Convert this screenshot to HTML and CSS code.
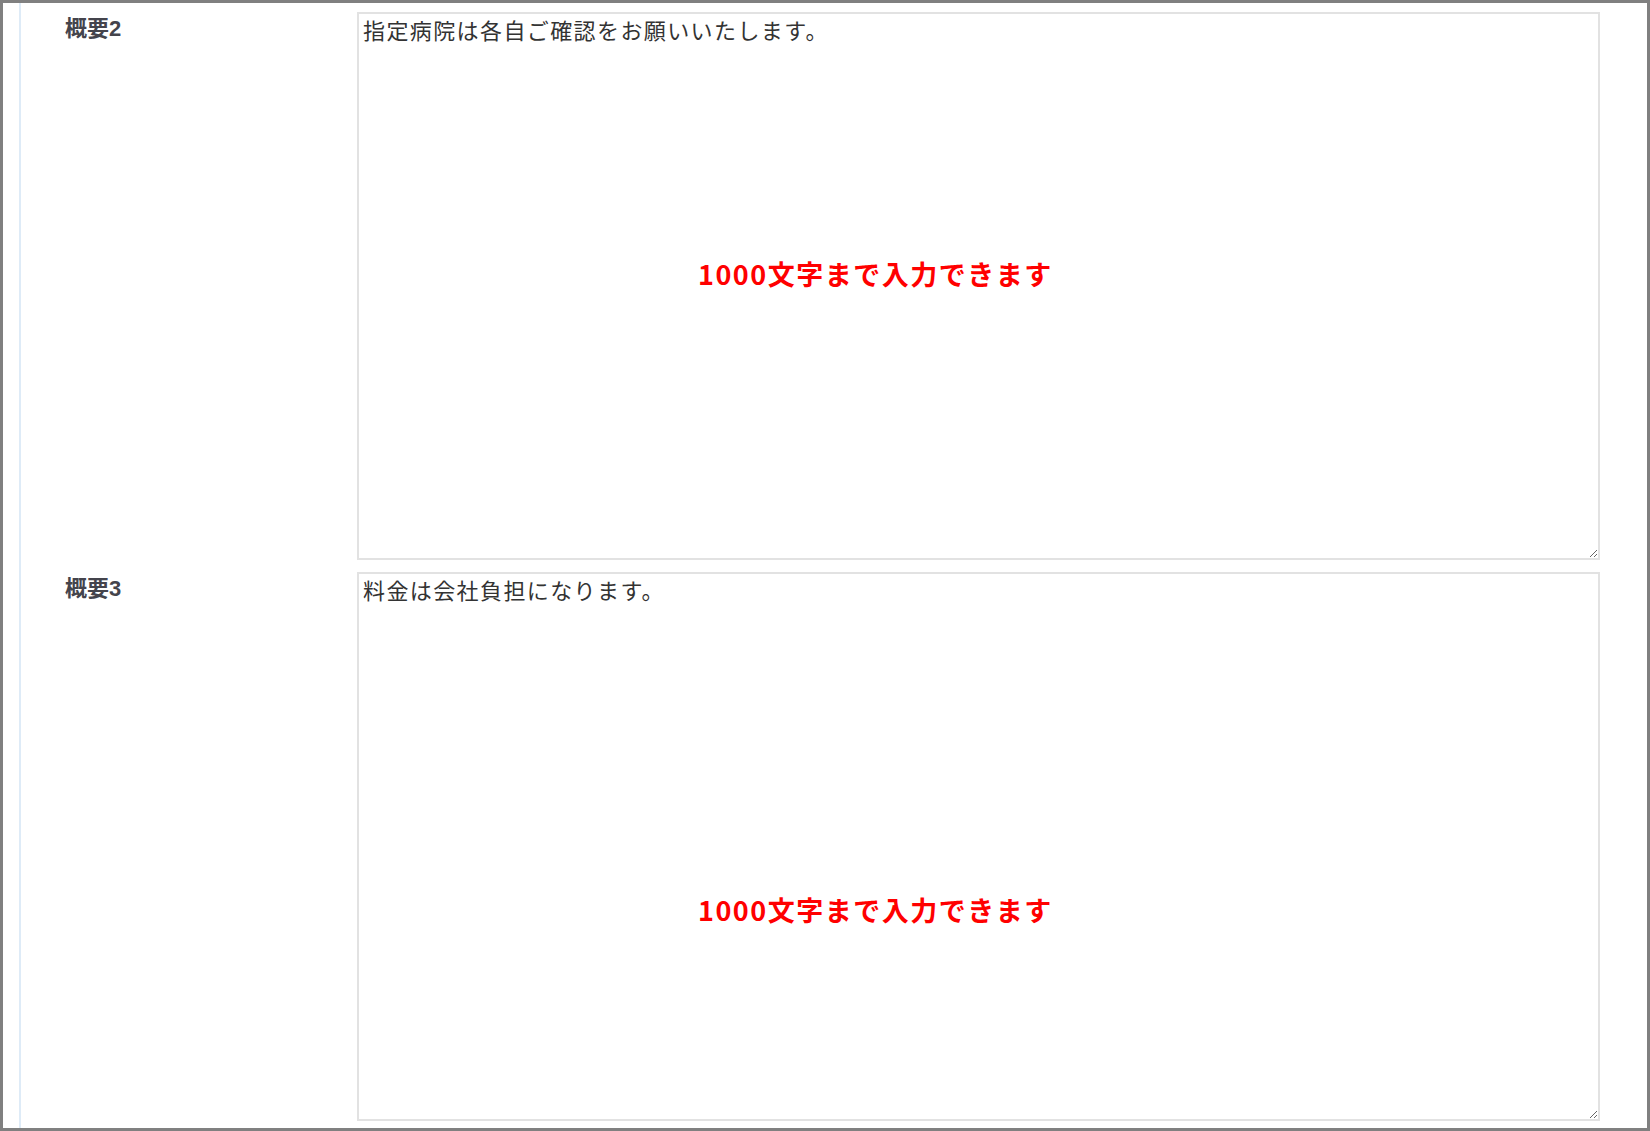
FILE: index.html
```html
<!DOCTYPE html>
<html lang="ja">
  <head>
    <meta charset="UTF-8" />
    <meta name="viewport" content="width=device-width, initial-scale=1.0" />
    <title>概要</title>
    <link rel="stylesheet" href="styles.css">
  </head>
  <body>
    <main class="frame">
      <section class="form">
        <div class="row">
          <label class="row-label" for="summary2">概要2</label>
          <div class="field">
            <textarea id="summary2">指定病院は各自ご確認をお願いいたします。</textarea>
            <span class="note note-first">1000文字まで入力できます</span>
          </div>
        </div>

        <div class="row">
          <label class="row-label" for="summary3">概要3</label>
          <div class="field">
            <textarea id="summary3">料金は会社負担になります。</textarea>
            <span class="note note-second">1000文字まで入力できます</span>
          </div>
        </div>
      </section>
    </main>
  </body>
</html>
```

FILE: styles.css
```css
html,
body {
  margin: 0;
  height: 100%;
}

body {
  font-family: "Liberation Sans", "Noto Sans CJK JP", sans-serif;
  background: #fff;
}

.frame {
  box-sizing: border-box;
  height: 100vh;
  border: 3px solid #808080;
  overflow: hidden;
  padding-left: 16px;
}

.form {
  height: 100%;
  border-left: 2px solid #deebf7;
  padding-top: 9px;
  display: flex;
  flex-direction: column;
  gap: 12px;
}

.row {
  display: grid;
  grid-template-columns: 336px 1243px;
}

.row-label {
  padding: 2px 0 0 44px;
  font-size: 22px;
  line-height: 1.4;
  font-weight: 700;
  color: #44444c;
}

.field {
  position: relative;

  textarea {
    display: block;
    box-sizing: border-box;
    width: 100%;
    height: 548px;
    margin: 0;
    padding: 0 4px;
    border: 2px solid #e2e2e2;
    font-family: "Noto Sans CJK JP", sans-serif;
    font-size: 22px;
    line-height: 1.4;
    letter-spacing: 1.4px;
    color: #333;
    background: #fff;
    outline: none;
    resize: vertical;
  }
}

.row + .row .field textarea {
  height: 549px;
}

.note {
  position: absolute;
  left: 341px;
  font-family: "Noto Sans CJK JP", sans-serif;
  font-size: 27px;
  line-height: 1;
  font-weight: 700;
  letter-spacing: 1.5px;
  color: #ff0000;
  white-space: nowrap;
  pointer-events: none;

  &.note-first {
    top: 248px;
  }

  &.note-second {
    top: 324px;
  }
}
```
